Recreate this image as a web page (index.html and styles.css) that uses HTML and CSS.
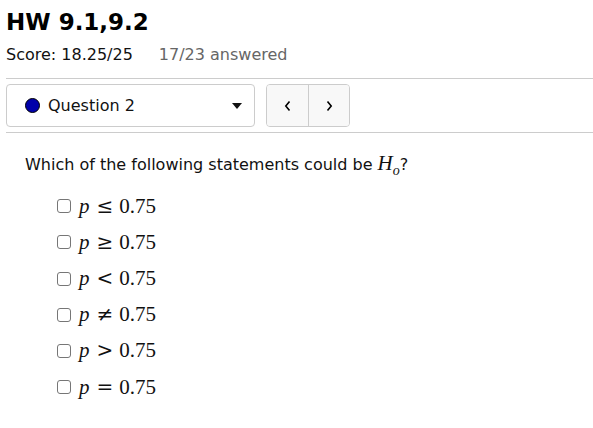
FILE: index.html
```html
<!DOCTYPE html>
<html>
<head>
<meta charset="utf-8">
<link rel="stylesheet" href="styles.css">
</head>
<body>
<div class="page">
  <h1 class="title">HW 9.1,9.2</h1>
  <div class="meta">
    <span class="score">Score: 18.25/25</span>
    <span class="answered">17/23 answered</span>
  </div>
  <div class="toolbar">
    <div class="select">
      <span class="dot"></span>
      <span class="qlabel">Question 2</span>
      <span class="caret"></span>
    </div>
    <div class="nav">
      <button class="navbtn"><svg width="8" height="12" viewBox="0 0 8 12"><path d="M5.5 1.5 L1.8 6 L5.5 10.5" fill="none" stroke="#000" stroke-width="1.6"/></svg></button>
      <button class="navbtn"><svg width="8" height="12" viewBox="0 0 8 12"><path d="M2.5 1.5 L6.2 6 L2.5 10.5" fill="none" stroke="#000" stroke-width="1.6"/></svg></button>
    </div>
  </div>
  <div class="question">
    <p class="prompt">Which of the following statements could be <span class="m"><i>H</i><sub><i>o</i></sub></span>?</p>
    <ul class="options">
      <li><span class="box"></span><span class="m"><i>p</i><span class="op">≤</span>0.75</span></li>
      <li><span class="box"></span><span class="m"><i>p</i><span class="op">≥</span>0.75</span></li>
      <li><span class="box"></span><span class="m"><i>p</i><span class="op">&lt;</span>0.75</span></li>
      <li><span class="box"></span><span class="m"><i>p</i><span class="op">≠</span>0.75</span></li>
      <li><span class="box"></span><span class="m"><i>p</i><span class="op">&gt;</span>0.75</span></li>
      <li><span class="box"></span><span class="m"><i>p</i><span class="op">=</span>0.75</span></li>
    </ul>
  </div>
</div>
</body>
</html>
```
FILE: styles.css
```css
html, body {
  margin: 0;
  padding: 0;
  background: #fff;
}
body {
  font-family: "DejaVu Sans", sans-serif;
  color: #111;
}
.page {
  padding: 0 0 0 6px;
}
.title {
  margin: 0;
  padding-top: 7px;
  font-family: "DejaVu Sans", sans-serif;
  font-weight: bold;
  font-size: 23px;
  line-height: 30px;
  color: #000;
}
.meta {
  margin-top: 8px;
  font-size: 16px;
  line-height: 20px;
  display: flex;
  gap: 26px;
  padding-bottom: 13px;
  border-bottom: 1px solid #ccc;
}
.score { color: #111; }
.answered { color: #666; }
.toolbar {
  display: flex;
  gap: 11px;
  padding: 5px 0 5px 0;
  border-bottom: 1px solid #ccc;
}
.select {
  border: 1px solid #ccc;
  border-radius: 4px;
  display: flex;
  align-items: center;
  padding: 0 12px 0 18px;
  box-sizing: border-box;
  width: 249px;
  height: 43px;
}
.dot {
  width: 13px;
  height: 13px;
  border-radius: 50%;
  background: #0000aa;
  border: 1px solid #000;
  margin-right: 8px;
}
.qlabel {
  font-size: 16px;
  flex: 1;
}
.caret {
  width: 0;
  height: 0;
  border-left: 5px solid transparent;
  border-right: 5px solid transparent;
  border-top: 6px solid #111;
}
.nav {
  display: flex;
  border: 1px solid #ccc;
  border-radius: 4px;
  background: #f8f8f8;
  height: 43px;
  box-sizing: border-box;
  overflow: hidden;
}
.navbtn {
  width: 41px;
  border: none;
  background: #f8f8f8;
  display: flex;
  align-items: center;
  justify-content: center;
  padding: 0;
}
.navbtn + .navbtn {
  border-left: 1px solid #ccc;
}
.question {
  padding-left: 19px;
}
.prompt {
  margin: 19px 0 0 0;
  font-size: 16px;
  line-height: 22px;
}
.m {
  font-family: "Liberation Serif", "DejaVu Serif", serif;
  font-size: 21px;
}
.m sub { font-size: 14px; }
.options {
  list-style: none;
  margin: 12px 0 0 0;
  padding: 0 0 0 32px;
  display: flex;
  flex-direction: column;
  gap: 12.2px;
}
.options li {
  display: flex;
  align-items: center;
  height: 24px;
}
.box {
  width: 12px;
  height: 12px;
  border: 1px solid #767676;
  border-radius: 3px;
  margin-right: 8px;
}
.op {
  padding: 0 6px 0 7px;
  font-family: "DejaVu Serif", serif;
  font-size: 20px;
}
```
